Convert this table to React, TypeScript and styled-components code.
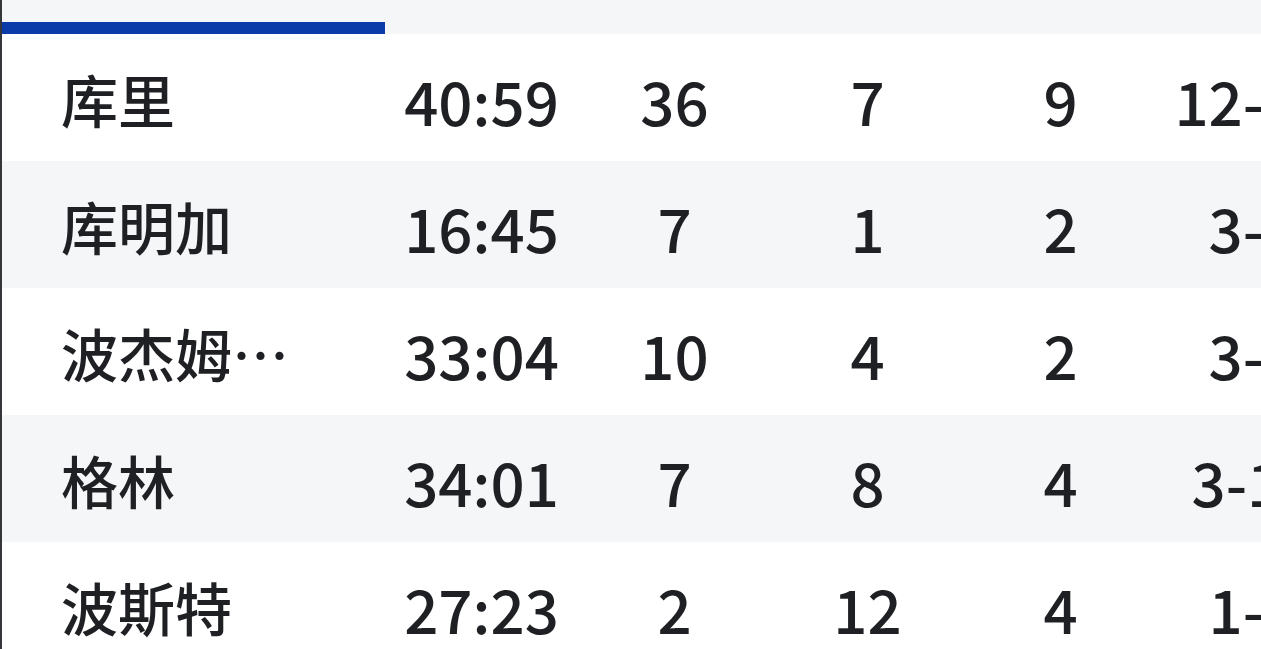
import styled, { createGlobalStyle } from "styled-components";

const GlobalStyle = createGlobalStyle`
  html, body {
    margin: 0;
    padding: 0;
    background: #ffffff;
  }
  body {
    font-family: "Noto Sans CJK SC", "Noto Sans", sans-serif;
    color: #1f2023;
  }
`;

type PlayerRow = {
  name: string;
  time: string;
  pts: string;
  reb: string;
  ast: string;
  fg: string;
};

const rows: PlayerRow[] = [
  { name: "库里", time: "40:59", pts: "36", reb: "7", ast: "9", fg: "12-19" },
  { name: "库明加", time: "16:45", pts: "7", reb: "1", ast: "2", fg: "3-8" },
  { name: "波杰姆…", time: "33:04", pts: "10", reb: "4", ast: "2", fg: "3-5" },
  { name: "格林", time: "34:01", pts: "7", reb: "8", ast: "4", fg: "3-10" },
  { name: "波斯特", time: "27:23", pts: "2", reb: "12", ast: "4", fg: "1-3" },
];

export default function App() {
  return (
    <>
      <GlobalStyle />
      <Page>
        <TabBar>
          <Tab active />
          <Tab />
          <Tab />
        </TabBar>
        <Table>
          {rows.map((r, i) => (
            <Row key={r.name} striped={i % 2 === 1}>
              <NameCell>{r.name}</NameCell>
              <StatCell>{r.time}</StatCell>
              <StatCell>{r.pts}</StatCell>
              <StatCell>{r.reb}</StatCell>
              <StatCell>{r.ast}</StatCell>
              <StatCell>{r.fg}</StatCell>
            </Row>
          ))}
        </Table>
      </Page>
    </>
  );
}

const Page = styled.div`
  width: 1261px;
  height: 649px;
  overflow: hidden;
  box-sizing: border-box;
  border-left: 2px solid #35363a;
  background: #ffffff;
`;

const TabBar = styled.div`
  display: grid;
  grid-template-columns: 383px 386px 386px;
  height: 34px;
  background: #f5f6f8;
`;

const Tab = styled.div<{ active?: boolean }>`
  height: 34px;
  box-sizing: border-box;
  border-bottom: 12px solid ${(p) => (p.active ? "#0a3ba8" : "transparent")};
  margin-left: ${(p) => (p.active ? "-2px" : "0")};
`;

const Table = styled.div`
  display: flex;
  flex-direction: column;
`;

const Row = styled.div<{ striped: boolean }>`
  display: grid;
  grid-template-columns: 383px repeat(5, 193px);
  height: 127px;
  align-items: center;
  background: ${(p) => (p.striped ? "#f5f6f8" : "#ffffff")};
`;

const NameCell = styled.div`
  padding-left: 59px;
  font-size: 57px;
  font-weight: 500;
  line-height: 1;
  white-space: nowrap;
  padding-top: 2px;
`;

const StatCell = styled.div`
  text-align: center;
  font-size: 60px;
  font-weight: 500;
  line-height: 1;
  white-space: nowrap;
  padding-top: 4px;
`;
